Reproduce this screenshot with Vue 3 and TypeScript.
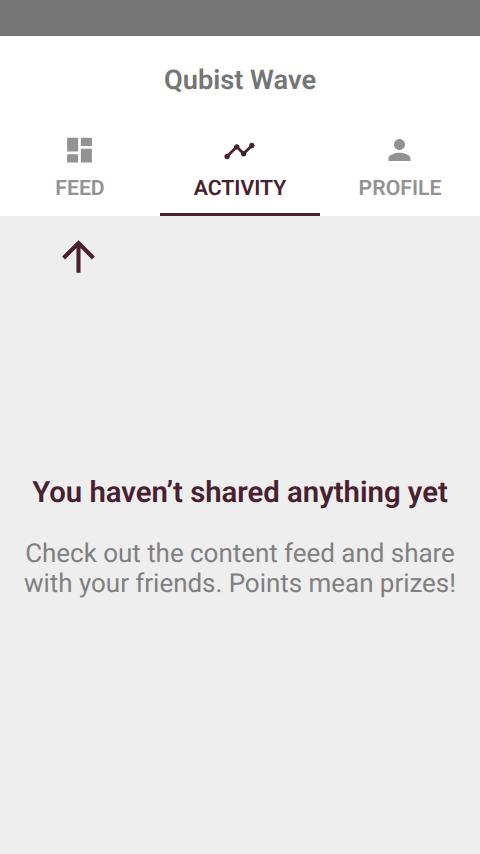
<script setup lang="ts">
interface Tab {
  label: string
  icon: string
  active?: boolean
}

const tabs: Tab[] = [
  { label: 'FEED', icon: 'M3 13h8V3H3v10zm0 8h8v-6H3v6zm10 0h8V11h-8v10zm0-18v6h8V3h-8z' },
  {
    label: 'ACTIVITY',
    icon: 'M23 8c0 1.1-.9 2-2 2-.18 0-.35-.02-.51-.07l-3.56 3.55c.05.16.07.34.07.52 0 1.1-.9 2-2 2s-2-.9-2-2c0-.18.02-.36.07-.52l-2.55-2.55c-.16.05-.34.07-.52.07s-.36-.02-.52-.07l-4.55 4.56c.05.16.07.33.07.51 0 1.1-.9 2-2 2s-2-.9-2-2 .9-2 2-2c.18 0 .35.02.51.07l4.56-4.55C8.02 9.36 8 9.18 8 9c0-1.1.9-2 2-2s2 .9 2 2c0 .18-.02.36-.07.52l2.55 2.55c.16-.05.34-.07.52-.07s.36.02.52.07l3.55-3.56C19.02 8.35 19 8.18 19 8c0-1.1.9-2 2-2s2 .9 2 2z',
    active: true,
  },
  {
    label: 'PROFILE',
    icon: 'M12 12c2.21 0 4-1.79 4-4s-1.79-4-4-4-4 1.79-4 4 1.79 4 4 4zm0 2c-2.67 0-8 1.34-8 4v2h16v-2c0-2.66-5.33-4-8-4z',
  },
]
</script>

<template>
  <div class="screen">
    <div class="status"></div>
    <header class="header">
      <h1 class="title">Qubist Wave</h1>
      <nav class="tabs">
        <a v-for="tab in tabs" :key="tab.label" class="tab" :class="{ active: tab.active }">
          <svg class="icon" viewBox="0 0 24 24"><path :d="tab.icon" /></svg>
          <span class="label">{{ tab.label }}</span>
        </a>
      </nav>
    </header>
    <main class="content">
      <svg class="arrow" viewBox="0 0 24 24">
        <path d="M4 12l1.41 1.41L11 7.83V20h2V7.83l5.58 5.59L20 12l-8-8-8 8z" />
      </svg>
      <h2 class="heading">You haven’t shared anything yet</h2>
      <p class="message">Check out the content feed and share<br />with your friends. Points mean prizes!</p>
    </main>
  </div>
</template>

<style>
body {
  background: #eee;
}
</style>

<style scoped>
.screen {
  display: flex;
  flex-direction: column;
  height: 854px;
  overflow: hidden;
  font-family: Roboto, sans-serif;
  text-rendering: geometricPrecision;
  background: #eee;
}
.status {
  height: 36px;
  background: #757575;
}
.header {
  height: 180px;
  background: #fff;
}
.title {
  height: 88px;
  margin: 0;
  color: #757575;
  font-size: 27.2px;
  font-weight: 600;
  line-height: 88px;
  text-align: center;
}
.tabs {
  display: flex;
  height: 92px;
}
.tab {
  box-sizing: border-box;
  display: flex;
  flex: 1;
  flex-direction: column;
  align-items: center;
  padding-top: 8px;
  color: #929292;
  border-bottom: 3px solid transparent;
}
.tab.active {
  color: #48202f;
  border-color: #48202f;
}
.icon {
  width: 33px;
  height: 36px;
  margin-right: 1px;
  fill: currentColor;
}
.active .icon {
  margin-top: 1px;
  margin-bottom: -1px;
}
.label {
  margin-top: 9px;
  font-size: 21.2px;
  font-weight: 600;
  line-height: 24px;
}
.content {
  display: flex;
  flex: 1;
  flex-direction: column;
}
.arrow {
  width: 49px;
  height: 49px;
  margin: 16px 0 0 54px;
  fill: #48202f;
}
.heading {
  margin: 194px 0 0;
  color: #48202f;
  font-size: 29.3px;
  font-weight: 600;
  line-height: 36px;
  text-align: center;
}
.message {
  margin: 28px 0 0;
  color: #808080;
  font-size: 26px;
  line-height: 30px;
  letter-spacing: -0.04px;
  text-align: center;
  white-space: nowrap;
}
</style>
